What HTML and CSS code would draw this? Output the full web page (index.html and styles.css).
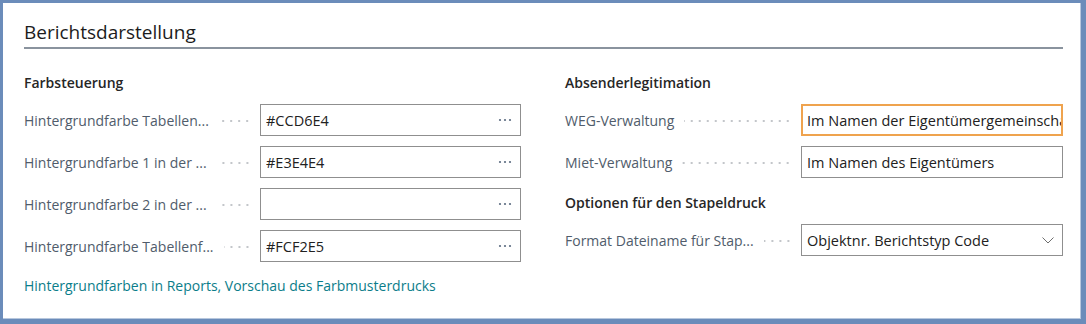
FILE: index.html
```html
<!DOCTYPE html>
<html lang="de">
<head>
    <meta charset="UTF-8">
    <title>Berichtsdarstellung</title>
    <link rel="stylesheet" href="styles.css">
</head>
<body>
    <div class="frame">
        <h1 class="title">Berichtsdarstellung</h1>

        <div class="columns">
            <div class="column">
                <div class="group-title">Farbsteuerung</div>

                <div class="field">
                    <div class="label"><span class="label-text">Hintergrundfarbe Tabellen...</span><span class="leader"></span></div>
                    <div class="input">
                        <span class="value">#CCD6E4</span>
                        <svg class="more" width="14" height="4" viewBox="0 0 14 4"><circle cx="2" cy="2" r="1.1"/><circle cx="7" cy="2" r="1.1"/><circle cx="12" cy="2" r="1.1"/></svg>
                    </div>
                </div>

                <div class="field">
                    <div class="label"><span class="label-text">Hintergrundfarbe 1 in der ...</span><span class="leader"></span></div>
                    <div class="input">
                        <span class="value">#E3E4E4</span>
                        <svg class="more" width="14" height="4" viewBox="0 0 14 4"><circle cx="2" cy="2" r="1.1"/><circle cx="7" cy="2" r="1.1"/><circle cx="12" cy="2" r="1.1"/></svg>
                    </div>
                </div>

                <div class="field">
                    <div class="label"><span class="label-text">Hintergrundfarbe 2 in der ...</span><span class="leader"></span></div>
                    <div class="input">
                        <span class="value"></span>
                        <svg class="more" width="14" height="4" viewBox="0 0 14 4"><circle cx="2" cy="2" r="1.1"/><circle cx="7" cy="2" r="1.1"/><circle cx="12" cy="2" r="1.1"/></svg>
                    </div>
                </div>

                <div class="field">
                    <div class="label"><span class="label-text">Hintergrundfarbe Tabellenf...</span><span class="leader"></span></div>
                    <div class="input">
                        <span class="value">#FCF2E5</span>
                        <svg class="more" width="14" height="4" viewBox="0 0 14 4"><circle cx="2" cy="2" r="1.1"/><circle cx="7" cy="2" r="1.1"/><circle cx="12" cy="2" r="1.1"/></svg>
                    </div>
                </div>

                <a class="link" href="#">Hintergrundfarben in Reports, Vorschau des Farbmusterdrucks</a>
            </div>

            <div class="column">
                <div class="group-title">Absenderlegitimation</div>

                <div class="field">
                    <div class="label"><span class="label-text">WEG-Verwaltung</span><span class="leader"></span></div>
                    <div class="input focused">
                        <span class="value">Im Namen der Eigentümergemeinschaft</span>
                    </div>
                </div>

                <div class="field">
                    <div class="label"><span class="label-text">Miet-Verwaltung</span><span class="leader"></span></div>
                    <div class="input">
                        <span class="value">Im Namen des Eigentümers</span>
                    </div>
                </div>

                <div class="group-title second">Optionen für den Stapeldruck</div>

                <div class="field">
                    <div class="label"><span class="label-text">Format Dateiname für Stap...</span><span class="leader"></span></div>
                    <div class="input">
                        <span class="value">Objektnr. Berichtstyp Code</span>
                        <svg class="chevron" width="12" height="7" viewBox="0 0 12 7"><polyline points="0.5,0.5 6,6 11.5,0.5"/></svg>
                    </div>
                </div>
            </div>
        </div>
    </div>
</body>
</html>
```

FILE: styles.css
```css
/* Page */
html, body {
    margin: 0;
    padding: 0;
    background-color: #fff;
}

body {
    font-family: 'Open Sans', 'Noto Sans', sans-serif;
    color: #212121;
}

/* Outer window frame */
.frame {
    box-sizing: border-box;
    width: 1086px;
    height: 324px;
    border-style: solid;
    border-color: #6b8cba;
    border-width: 3px 5px 5px 3px;
    box-shadow: inset -1px -1px 0 #b7c7dd;
    padding: 15px 18px 0 21px;
    background-color: #fff;
}

/* Page title with underline */
.title {
    margin: 0;
    font-size: 19px;
    font-weight: 400;
    line-height: 28px;
    padding-bottom: 1px;
    border-bottom: 2px solid #8a939e;
    color: #1c1c1c;
}

.columns {
    display: grid;
    grid-template-columns: 497px 498px;
    column-gap: 44px;
    margin-top: 24px;
}

.group-title {
    font-size: 14px;
    font-weight: 600;
    line-height: 20px;
    margin-bottom: 11px;
    color: #262626;
}

.group-title.second {
    margin-top: 15px;
}

/* Field rows */
.field {
    display: flex;
    align-items: center;
    height: 32px;
    margin-bottom: 10px;
}

.label {
    width: 236px;
    display: flex;
    align-items: center;
    font-size: 14px;
    color: #505c6b;
    flex-shrink: 0;
}

.label-text {
    white-space: nowrap;
}

.leader {
    flex: 1;
    height: 4px;
    margin: 2px 9px 0 10px;
    background-image: radial-gradient(circle, #c3c6ca 0.9px, transparent 1.2px);
    background-size: 8px 4px;
    background-repeat: repeat-x;
    background-position: right center;
}

.input {
    box-sizing: border-box;
    flex: 1;
    height: 32px;
    border: 1px solid #8f8f8f;
    display: flex;
    align-items: center;
    padding: 0 8px 0 5px;
    overflow: hidden;
    font-size: 14.5px;
    color: #212121;
}

.input.focused {
    border: 2px solid #efa34e;
    padding-left: 4px;
    padding-right: 0;
}

.value {
    flex: 1;
    white-space: nowrap;
    overflow: hidden;
}

.more {
    fill: #5b6b80;
    flex-shrink: 0;
}

.chevron {
    fill: none;
    stroke: #6e6e6e;
    stroke-width: 1;
    flex-shrink: 0;
    margin-right: 0;
}

/* Link */
.link {
    display: block;
    margin-top: 14px;
    font-size: 14px;
    line-height: 20px;
    color: #0b7d8a;
    text-decoration: none;
}
```
